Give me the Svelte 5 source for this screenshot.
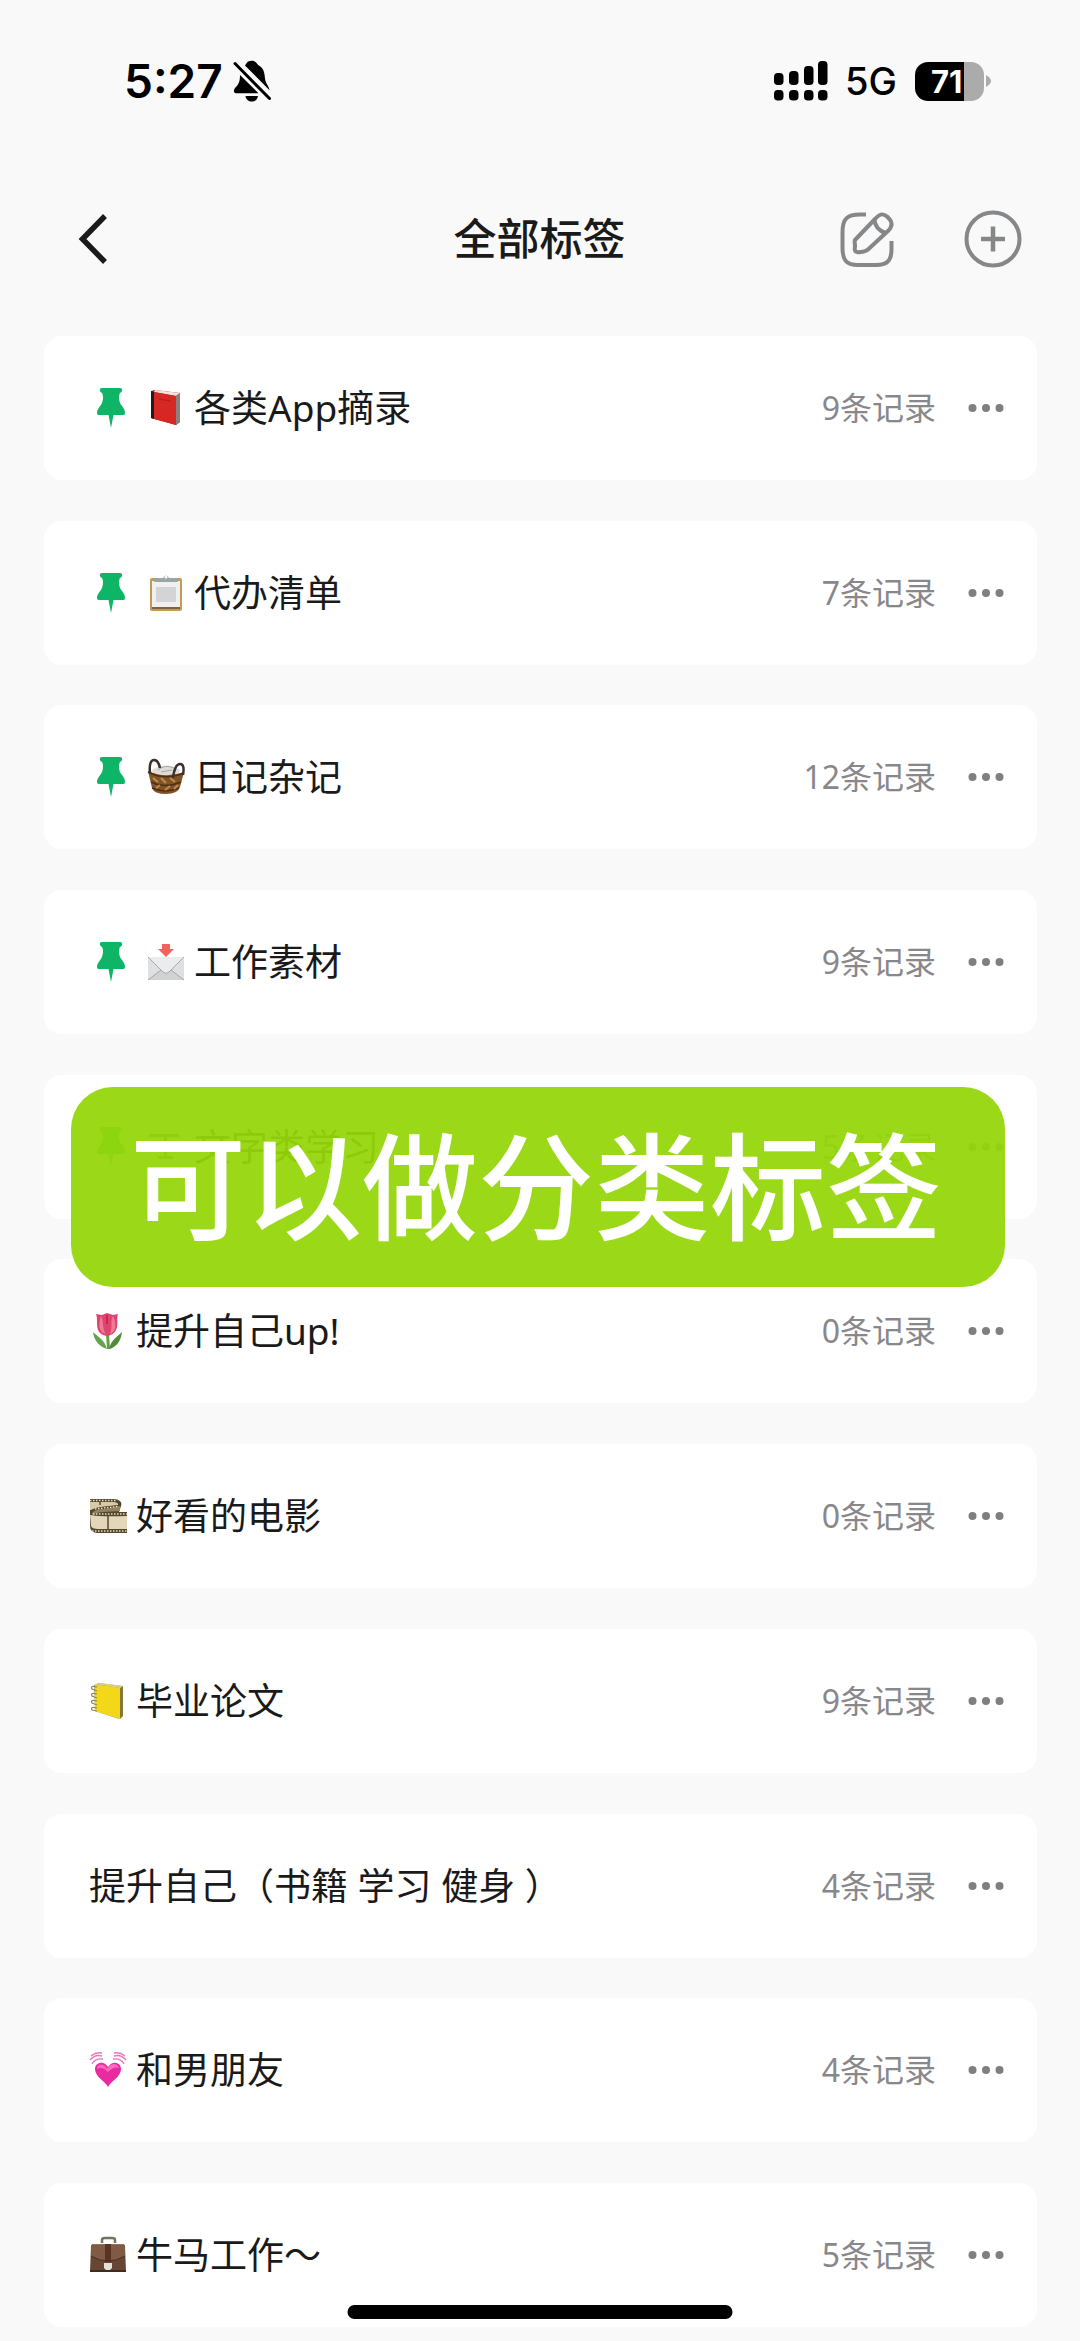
<script>
  const tags = [
    { icon: 'book', name: '各类App摘录', count: 9, pinned: true },
    { icon: 'clipboard', name: '代办清单', count: 7, pinned: true },
    { icon: 'basket', name: '日记杂记', count: 12, pinned: true },
    { icon: 'mail', name: '工作素材', count: 9, pinned: true },
    { icon: 'text', name: '文字类学习', count: 5, pinned: true },
    { icon: 'tulip', name: '提升自己up!', count: 0 },
    { icon: 'film', name: '好看的电影', count: 0 },
    { icon: 'notebook', name: '毕业论文', count: 9 },
    { icon: '', name: '提升自己（书籍 学习 健身 ）', count: 4 },
    { icon: 'heart', name: '和男朋友', count: 4 },
    { icon: 'briefcase', name: '牛马工作～', count: 5 }
  ];

  // signal bars: x position and top of the upper segment
  const bars = [
    { x: 0, y: 12 },
    { x: 15, y: 10 },
    { x: 30, y: 5 },
    { x: 44, y: 0 }
  ];
</script>

<div class="page">
  <div class="status">
    <div class="status-left">
      <span class="time">5:27</span>
      <svg class="bell" viewBox="0 0 38 42" width="38" height="42" aria-hidden="true">
        <path d="M12 5.5C13.500 4 14 0.800 18.500 0.800S23.500 3.500 25.500 5.200C31 8 31.500 13 32 18.500C32.500 23.500 36 26 36.500 30.200Z" />
        <path d="M7 15L25.500 33.200H3C0 33 0.500 29.500 2.500 27.500C6 24 7 21 7 15Z" />
        <path d="M12.500 36H25C24.500 39.500 22 41.500 18.700 41.500S13 39.500 12.500 36Z" />
        <path d="M2 3.500L36.500 38.500" fill="none" stroke="#f9f9f9" stroke-width="6" />
        <path d="M2 3.500L36.500 38.500" fill="none" stroke="#000" stroke-width="3" stroke-linecap="round" />
      </svg>
    </div>
    <div class="status-right">
      <svg class="signal" viewBox="0 0 54 40" width="54" height="40" aria-hidden="true">
        {#each bars as b}
          <rect x={b.x} y={b.y} width="9.500" height={24 - b.y} rx="3.800" />
          <rect x={b.x} y="29" width="9.500" height="10.500" rx="3.800" />
        {/each}
      </svg>
      <span class="net">5G</span>
      <div class="battery">
        <div class="battery-body"><span>71</span></div>
        <svg viewBox="0 0 5 14" width="5" height="14" aria-hidden="true"><path d="M0 1Q5 4 5 7T0 13Z" fill="#ababab" /></svg>
      </div>
    </div>
  </div>

  <header class="nav">
    <button class="icon-btn back" aria-label="返回">
      <svg viewBox="0 0 30 50" width="30" height="50"><path d="M27 2L4.500 25L27 48" fill="none" stroke="#1a1a1a" stroke-width="5.500" /></svg>
    </button>
    <h1>全部标签</h1>
    <div class="actions">
      <button class="icon-btn" aria-label="编辑">
        <svg viewBox="0 0 54 56" width="54" height="56" fill="none" stroke="#858789" stroke-width="4">
          <path d="M26 3.500H20C7 3.500 2.500 8 2.500 21V37C2.500 50 7 54 18 54H36C47 54 51.500 50 51.500 38V30" />
          <path d="M15 29L35.500 7.500C40 2.500 43 2 47 5.500L49 7.500C52.500 11 52.500 15 48.500 19.500L28 38.500C26 40.500 20 41.500 17 41C14.500 40.700 14.500 38 15 35.500C15.200 32.500 14 31 15 29Z" stroke-linejoin="round" />
          <path d="M34.500 9C35 15 38.500 19.500 45.500 22" />
        </svg>
      </button>
      <button class="icon-btn" aria-label="新建">
        <svg viewBox="0 0 58 58" width="58" height="58" fill="none" stroke="#858789" stroke-width="4">
          <circle cx="29" cy="29" r="26.500" />
          <path d="M17 29H41M29 16.500V41.500" stroke-width="4.500" />
        </svg>
      </button>
    </div>
  </header>

  <ul class="list">
    {#each tags as tag}
      <li class="card">
        {#if tag.pinned}
          <svg class="pin" viewBox="0 0 44 42" width="44" height="42" aria-hidden="true">
            <path d="M13 1H31C33 1 33.500 2.500 33 4C32.500 5.500 31 5.500 30.500 7C29.500 10 30 14 31.500 17C33.500 20 36 22 36 26Q36 28 34.500 28H24.500L22 41L19.500 28H9.500Q8 28 8 26C8 22 11 20 12.500 17C14 14 14.500 10 13.500 7C13 5.500 11.500 5.500 11 4C10.500 2.500 11 1 13 1Z" fill="#0fb566" />
          </svg>
        {/if}
        {#if tag.icon}
          <svg class="emoji" viewBox="0 0 38 38" width="38" height="38" aria-hidden="true">
            {#if tag.icon === 'book'}
              <path d="M4 2L8 1L33 4V33L29 36L4 29Z" fill="#9d1a1b" />
              <path d="M8 1L33 4L29 7L7 3Z" fill="#efe3e0" />
              <path d="M29 7L33 4V33L29 36Z" fill="#8a8080" />
              <path d="M7 3L29 7V36L7 30Z" fill="#d62725" />
              <path d="M4 2L7 3V30L4 29Z" fill="#26191b" />
              <path d="M12 10L24 12" stroke="#b51b1b" stroke-width="1" />
            {:else if tag.icon === 'clipboard'}
              <rect x="3" y="4" width="32" height="33" rx="2" fill="#c19a55" />
              <rect x="5" y="7" width="28" height="27" fill="#f0f0f3" />
              <path d="M9 13H29V28H9Z" fill="#d4d3d6" />
              <path d="M5 33H33V35H5Z" fill="#7e6539" />
              <path d="M7 8Q7 4 11 4H16Q19 -1 22 4H27Q31 4 31 8Z" fill="#9aa5a6" />
              <circle cx="19" cy="3.200" r="1.400" fill="#fff" />
            {:else if tag.icon === 'basket'}
              <path d="M5 12Q19 3 33 12L30 18H7Z" fill="#dedcda" />
              <path d="M11 12Q18 6 27 10M14 14L25 12" stroke="#a8a4a1" fill="none" />
              <path d="M1 13Q18 21 37 14L33 29Q31 36 19 36T5 30Z" fill="#815426" />
              <path d="M1 14Q18 23 37 15M4 24Q18 31 34 24M5 30Q18 36 32 30" stroke="#503015" stroke-width="1.500" fill="none" />
              <path d="M6 20L11 24M14 20L19 25M23 20L28 24M9 30L13 27M18 32L23 28M27 31L31 27" stroke="#bd8b51" stroke-width="2" />
              <path d="M3 15C2 6 4 2 7 2S12 5 13 10M26 20C27 12 29 6 33 6S37 11 36 17" stroke="#3d302b" stroke-width="2.500" fill="none" />
            {:else if tag.icon === 'mail'}
              <path d="M15 1H23V6H27L19 14L11 6H15Z" fill="#f2625f" />
              <rect x="1" y="14" width="36" height="23" fill="#dfe0e2" />
              <path d="M1 37L15 26H23L37 37Z" fill="#d0d2d4" />
              <path d="M1 14L16 29Q19 32 22 29L37 14Z" fill="#ececee" />
              <path d="M1 14L16 29Q19 32 22 29L37 14M1 37L14 27M37 37L24 27" stroke="#a5aaab" fill="none" />
            {:else if tag.icon === 'text'}
              <path d="M2 6H32V9H20V28H26V31H11V28H17V9H2Z" fill="#555" />
            {:else if tag.icon === 'tulip'}
              <path d="M17 22H20L21 37H18Z" fill="#62a243" />
              <path d="M18 37C15 27 9 25 4 20C5 29 11 35 18 37Z" fill="#66a14e" />
              <path d="M20 37C22 28 28 25 33 20C32 30 26 36 20 37Z" fill="#518c38" />
              <path d="M7 2L13 3L18 1L24 3L29 2C27 7 30 12 27 18Q25 23 18 24Q11 23 9 18C7 12 9 7 7 2Z" fill="#e1436f" />
              <path d="M12 4C15 9 13 18 17 22C10 21 9 13 12 4ZM24 4C21 9 24 15 21 22C27 20 28 12 24 4Z" fill="#ef7c97" />
              <path d="M18 3V12" stroke="#b32252" stroke-width="1.500" />
            {:else if tag.icon === 'film'}
              <path d="M1 2H25Q34 3 32 9L30 15H38V36H8Q1 35 1 29Z" fill="#54472f" />
              <path d="M1 5H25Q30 6 29 8C22 9 8 9 2 13H1Z" fill="#d6caa8" />
              <path d="M3 16Q6 12 16 12L31 9V14L14 15Q6 16 3 18Z" fill="#93825f" />
              <path d="M1 18Q11 20 38 19V32H9Q3 32 2 29Z" fill="#e2d8b9" />
              <path d="M1 3.500H28M3 34H38M4 17H38M6 12L29 9.500" stroke="#e8ddbd" stroke-width="1.500" stroke-dasharray="1.500 1.500" fill="none" />
              <path d="M19 19V33M11 4V8" stroke="#5d472d" stroke-width="1.500" />
            {:else if tag.icon === 'notebook'}
              <path d="M5 3L10 1L34 4V33L30 37L6 29Z" fill="#a9a36a" />
              <path d="M6 2L31 6V37L6 29Z" fill="#f3d719" />
              <path d="M31 6L34 4V34L31 37Z" fill="#827a38" />
              <path d="M7 2L11 1L34 4L31 6Z" fill="#d4cf9a" />
              <path d="M8 5Q1 3 3 7L8 9M8 12Q1 10 3 14L8 16M8 19Q1 17 3 21L8 23M8 26Q1 24 3 28L8 29" stroke="#8d8752" stroke-width="1.200" fill="none" />
            {:else if tag.icon === 'heart'}
              <path d="M19 36C16 30 6 26 6 18C6 11 15 9 19 16C23 9 32 11 32 18C32 26 22 30 19 36Z" fill="#ea2a9f" />
              <path d="M8 18C8 12 15 12 18 18C21 12 28 11 30 17Q25 15 19 21Q13 15 8 18Z" fill="#fb69c1" />
              <path d="M3 13Q6 7 14 8M1 9Q6 3 13 5M2 5Q7 1 13 2M35 13Q32 7 24 8M37 9Q32 3 25 5M36 5Q31 1 25 2" stroke="#e777ba" stroke-width="1.400" fill="none" />
            {:else}
              <path d="M13 7V4Q13 2 16 2H23Q26 2 26 4V7" fill="none" stroke="#74735d" stroke-width="2.500" />
              <path d="M3 8H35L36 12H2Z" fill="#987057" />
              <path d="M2 10H36L37 36H1Z" fill="#674634" />
              <path d="M2 9H36V20Q28 25 19 25T2 20Z" fill="#815a46" />
              <path d="M16 8H22V26H16Z" fill="#5a3422" />
              <path d="M2 20Q10 25 19 25T36 20" fill="none" stroke="#4b2e21" />
              <path d="M15 27H23V32L21 34H17L15 32Z" fill="#e5e1da" />
              <path d="M1 34H37V36H1Z" fill="#3d2c24" />
            {/if}
          </svg>
        {/if}
        <span class="name">{tag.name}</span>
        <span class="count">{tag.count}条记录</span>
        <button class="icon-btn more" aria-label="更多">
          <svg viewBox="0 0 36 10" width="36" height="10" fill="#7f7f7f">
            <circle cx="4.500" cy="5" r="4" />
            <circle cx="18" cy="5" r="4" />
            <circle cx="31.500" cy="5" r="4" />
          </svg>
        </button>
      </li>
    {/each}
  </ul>

  <div class="banner">可以做分类标签</div>
  <div class="home-bar"></div>
</div>

<style>
  :global(body) { margin: 0; background: #f9f9f9; }

  .page {
    position: relative;
    box-sizing: border-box;
    min-height: 100vh;
    display: flex;
    flex-direction: column;
    padding-bottom: 14px;
    background: #f9f9f9;
    color: #1a1a1a;
    font-family: "Noto Sans", "Noto Sans CJK SC", sans-serif;
  }

  .icon-btn { display: flex; padding: 0; border: 0; background: none; cursor: pointer; }
  svg { display: block; flex: none; }

  .status {
    display: flex;
    align-items: center;
    justify-content: space-between;
    height: 40px;
    padding: 61px 89px 0 124px;
    color: #000;
    font-family: Inter, sans-serif;
  }
  .status-left, .status-right { display: flex; align-items: center; }
  .status-left { gap: 10px; }
  .time { font-size: 46px; line-height: 40px; font-weight: 600; }
  .net { margin: 0 18px 0 17px; font-size: 38px; line-height: 40px; font-weight: 500; }
  .battery { display: flex; align-items: center; gap: 2px; }
  .battery-body {
    box-sizing: border-box;
    width: 69px;
    height: 39px;
    padding-left: 16px;
    border-radius: 13px;
    background: linear-gradient(to right, #000 71%, #ababab 71%);
    color: #fff;
    font-size: 31px;
    line-height: 39px;
    font-weight: 700;
  }

  .nav {
    display: grid;
    grid-template-columns: 1fr auto 1fr;
    align-items: center;
    height: 60px;
    margin-top: 108px;
    padding: 0 58px 0 78px;
  }
  .back { justify-self: start; }
  h1 { margin: 0; font-size: 43px; line-height: 60px; font-weight: 500; padding-right: 21px; }
  .actions { display: flex; align-items: center; justify-content: flex-end; gap: 70px; }

  .list {
    flex: 1;
    display: flex;
    flex-direction: column;
    justify-content: space-between;
    gap: 40px;
    margin: 67px 43px 0 44px;
    padding: 0;
    list-style: none;
  }
  .card {
    display: flex;
    align-items: center;
    box-sizing: border-box;
    height: 144px;
    padding: 0 33px 0 45px;
    border-radius: 18px;
    background: #fff;
  }
  .pin { margin-right: 14px; }
  .emoji { margin-right: 9px; }
  .name { flex: 1; font-size: 37px; line-height: 52px; white-space: pre; }
  .count { margin-right: 32px; color: #88888c; font-size: 32px; line-height: 44px; }

  .banner {
    position: absolute;
    top: 1087px;
    left: 71px;
    right: 75px;
    box-sizing: border-box;
    height: 200px;
    padding-right: 4px;
    border-radius: 42px;
    background: rgba(149, 215, 10, 0.94);
    color: #fff;
    font-size: 116px;
    line-height: 198px;
    font-weight: 500;
    text-align: center;
    white-space: nowrap;
  }
  .home-bar {
    position: absolute;
    bottom: 22px;
    left: 50%;
    width: 385px;
    height: 14px;
    border-radius: 7px;
    background: #000;
    transform: translateX(-50%);
  }
</style>
